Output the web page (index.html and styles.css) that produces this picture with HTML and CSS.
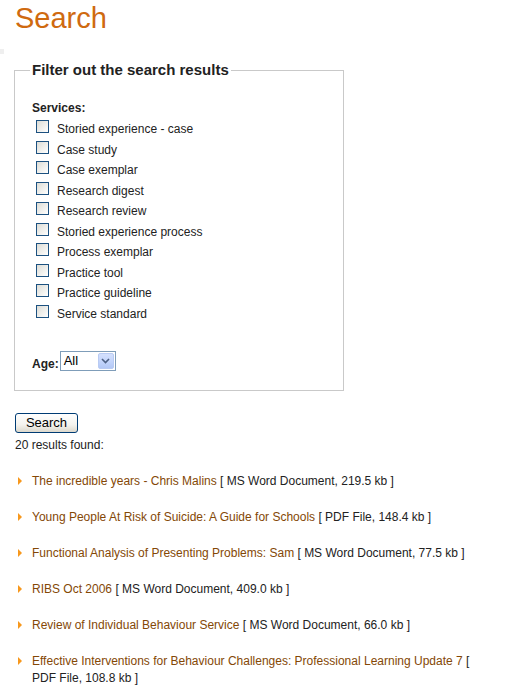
FILE: index.html
```html
<!DOCTYPE html>
<html>
<head>
<meta charset="utf-8">
<title>Search</title>
<link rel="stylesheet" href="styles.css">
</head>
<body>
<h1 class="title">Search</h1>
<div class="spacer"></div>
<form class="search-form">
  <fieldset class="filter">
    <legend class="filter-legend">Filter out the search results</legend>
    <div class="filter-body">
      <div class="group-label">Services:</div>
      <div class="options">
        <label class="option"><input type="checkbox" class="check"><span class="option-text">Storied experience - case</span></label>
        <label class="option"><input type="checkbox" class="check"><span class="option-text">Case study</span></label>
        <label class="option"><input type="checkbox" class="check"><span class="option-text">Case exemplar</span></label>
        <label class="option"><input type="checkbox" class="check"><span class="option-text">Research digest</span></label>
        <label class="option"><input type="checkbox" class="check"><span class="option-text">Research review</span></label>
        <label class="option"><input type="checkbox" class="check"><span class="option-text">Storied experience process</span></label>
        <label class="option"><input type="checkbox" class="check"><span class="option-text">Process exemplar</span></label>
        <label class="option"><input type="checkbox" class="check"><span class="option-text">Practice tool</span></label>
        <label class="option"><input type="checkbox" class="check"><span class="option-text">Practice guideline</span></label>
        <label class="option"><input type="checkbox" class="check"><span class="option-text">Service standard</span></label>
      </div>
      <div class="age-row">
        <span class="age-label">Age:</span>
        <span class="select">
          <span class="select-value">All</span>
          <span class="select-btn">
            <svg width="9" height="6" viewBox="0 0 9 6"><path d="M1 1 L4.5 4.5 L8 1" fill="none" stroke="#4d6185" stroke-width="1.6"/></svg>
          </span>
        </span>
      </div>
    </div>
  </fieldset>
  <button type="button" class="search-btn">Search</button>
</form>
<p class="count">20 results found:</p>
<ul class="results">
  <li class="result"><a class="result-link" href="#">The incredible years - Chris Malins</a> [ MS Word Document, 219.5 kb ]</li>
  <li class="result"><a class="result-link" href="#">Young People At Risk of Suicide: A Guide for Schools</a> [ PDF File, 148.4 kb ]</li>
  <li class="result"><a class="result-link" href="#">Functional Analysis of Presenting Problems: Sam</a> [ MS Word Document, 77.5 kb ]</li>
  <li class="result"><a class="result-link" href="#">RIBS Oct 2006</a> [ MS Word Document, 409.0 kb ]</li>
  <li class="result"><a class="result-link" href="#">Review of Individual Behaviour Service</a> [ MS Word Document, 66.0 kb ]</li>
  <li class="result"><a class="result-link" href="#">Effective Interventions for Behaviour Challenges: Professional Learning Update 7</a> [ PDF File, 108.8 kb ]</li>
</ul>
</body>
</html>
```

FILE: styles.css
```css
html, body {
  margin: 0;
  padding: 0;
  background: #fff;
}
body {
  padding: 0 15px;
  font-family: "Liberation Sans", Arial, sans-serif;
  font-size: 12px;
  color: #222;
  width: 475px;
}
.title {
  margin: 0;
  padding-top: 1px;
  font-size: 29px;
  line-height: 34px;
  font-weight: normal;
  color: #cf6a10;
}
.spacer {
  margin: 14px 0 0 -15px;
  width: 4px;
  height: 5px;
  background: #efefef;
}
.search-form {
  margin: 0;
}
.filter {
  box-sizing: border-box;
  width: 330px;
  margin: 7px 0 0 -1px;
  padding: 0 15px 19px;
  border: 1px solid #c9c9c9;
}
.filter-legend {
  padding: 0 2px;
  font-size: 15px;
  line-height: 18px;
  font-weight: bold;
  color: #222;
}
.filter-body {
  padding: 22px 0 0 2px;
}
.group-label {
  font-weight: bold;
  line-height: 15px;
}
.options {
  display: flex;
  flex-direction: column;
}
.option {
  display: flex;
  align-items: flex-start;
  height: 20.5px;
}
.check {
  appearance: none;
  -webkit-appearance: none;
  box-sizing: border-box;
  width: 13px;
  height: 13px;
  margin: 4px 0 0 4px;
  border: 1px solid #1c5180;
  background: linear-gradient(135deg, #dcdcd6 0%, #f1f1ee 60%, #ffffff 100%);
}
.option-text {
  margin-left: 8px;
  padding-top: 6px;
  line-height: 14px;
}
.age-row {
  display: flex;
  align-items: flex-end;
  margin-top: 30px;
}
.age-label {
  font-weight: bold;
  line-height: 15px;
  margin-bottom: -1px;
}
.select {
  box-sizing: border-box;
  display: flex;
  align-items: center;
  justify-content: space-between;
  width: 56px;
  height: 20px;
  margin-left: 1px;
  padding: 1px;
  border: 1px solid #7f9db9;
  background: #fff;
}
.select-value {
  padding-left: 2px;
  font-size: 13px;
  line-height: 16px;
  color: #000;
}
.select-btn {
  box-sizing: border-box;
  display: flex;
  align-items: center;
  justify-content: center;
  width: 16px;
  height: 16px;
  border: 1px solid #b9cbf3;
  border-radius: 2px;
  background: linear-gradient(180deg, #d4e0fd 0%, #c1d3fb 60%, #b3c8f6 100%);
}
.search-btn {
  box-sizing: border-box;
  display: block;
  width: 63px;
  height: 20px;
  margin: 22px 0 0 0;
  padding: 0;
  border: 1px solid #003c74;
  border-radius: 3px;
  background: linear-gradient(180deg, #ffffff 0%, #f4f3ee 60%, #dcd8cc 100%);
  font-family: "Liberation Sans", Arial, sans-serif;
  font-size: 13px;
  line-height: 18px;
  color: #000;
}
.count {
  margin: 5px 0 0;
  line-height: 15px;
}
.results {
  list-style: none;
  margin: 20px 0 0;
  padding: 0;
}
.result {
  position: relative;
  padding-left: 17px;
  margin-bottom: 19px;
  line-height: 17px;
}
.result::before {
  content: "";
  position: absolute;
  left: 3px;
  top: 4px;
  width: 0;
  height: 0;
  border-left: 4px solid #f7981d;
  border-top: 4px solid transparent;
  border-bottom: 4px solid transparent;
}
.result-link {
  color: #844806;
  text-decoration: none;
}
```
